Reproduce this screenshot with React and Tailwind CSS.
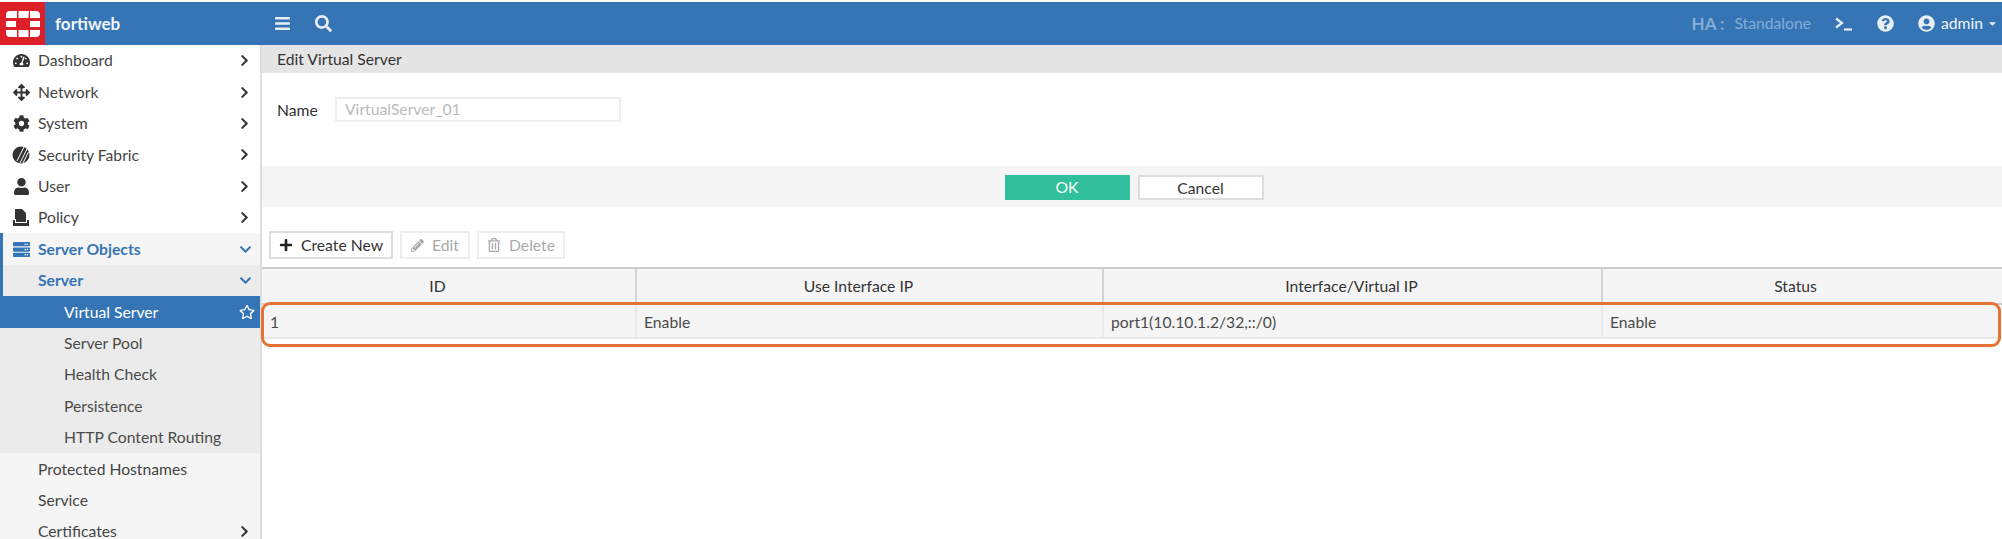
import React from "react";
import {
  FaBars,
  FaSearch,
  FaQuestionCircle,
  FaUserCircle,
  FaCaretDown,
  FaTachometerAlt,
  FaArrowsAlt,
  FaCog,
  FaUser,
  FaServer,
  FaChevronRight,
  FaChevronDown,
  FaRegStar,
  FaPlus,
  FaPencilAlt,
  FaRegTrashAlt,
} from "react-icons/fa";

function Logo() {
  return (
    <svg width="34" height="26" viewBox="0 0 34 26" fill="#fff">
      <path d="M11 0H4a4 4 0 0 0-4 4v3h11zM23 0H12.500v7H22.500zM24 0v7h10V4a4 4 0 0 0-4-4z" />
      <path d="M0 10h10v6H0zM24 10h10v6H24z" />
      <path d="M0 19v3a4 4 0 0 0 4 4h7v-7zM12.500 19v7H22.500v-7zM24 19v7h6a4 4 0 0 0 4-4v-3z" />
    </svg>
  );
}

function FabricIcon() {
  return (
    <svg width="18" height="18" viewBox="0 0 18 18">
      <circle cx="9" cy="9" r="8.500" fill="#333" />
      <path d="M8 17 15 3M11 17 16.500 6M5 15 12 1" stroke="#fff" strokeWidth="1" />
    </svg>
  );
}

function PolicyIcon() {
  return (
    <svg width="18" height="18" viewBox="0 0 18 18" fill="#333">
      <path d="M3 0h7l4 4v6H3z" />
      <path d="M1 11h2v3h12v-3h2v6H1z" />
      <path d="M4 10h10v3H4z" />
    </svg>
  );
}

function TerminalIcon() {
  return (
    <svg width="18" height="14" viewBox="0 0 18 14" fill="none" stroke="#e8eef6" strokeWidth="2.200">
      <path d="M1 1.500 7 6l-6 4.500" />
      <path d="M9 12.500h8" />
    </svg>
  );
}

function MenuRow({ icon, label, chevron, className = "", labelClass = "", iconBox = "w-[38px]" }) {
  return (
    <div className={`flex h-[31.4px] items-center ${className}`}>
      <span className={`flex shrink-0 justify-end pr-[8px] ${iconBox}`}>{icon}</span>
      <span className={`flex-1 whitespace-nowrap pt-[1px] ${labelClass}`}>{label}</span>
      {chevron === "right" && <FaChevronRight className="mr-[9px] text-[13px] text-[#333]" />}
      {chevron === "down" && <FaChevronDown className="mr-[8px] text-[13px] text-[#3575b5]" />}
    </div>
  );
}

function SubRow({ label, active }) {
  return (
    <div
      className={`flex h-[31.4px] items-center pl-[64px] ${
        active ? "bg-[#3575b5] text-white" : "text-[#4a4a4a]"
      }`}
    >
      <span className="flex-1 whitespace-nowrap pt-[1px]">{label}</span>
      {active && <FaRegStar className="mr-[5px] text-[16px] text-white" />}
    </div>
  );
}

function Sidebar() {
  const icon = "text-[17px] text-[#333]";
  return (
    <div className="w-[262px] shrink-0 overflow-hidden border-r-2 border-[#dddddd] bg-white text-[15.700px] text-[#444]">
      <MenuRow icon={<FaTachometerAlt className={icon} />} label="Dashboard" chevron="right" />
      <MenuRow icon={<FaArrowsAlt className={icon} />} label="Network" chevron="right" />
      <MenuRow icon={<FaCog className={icon} />} label="System" chevron="right" />
      <MenuRow icon={<FabricIcon />} label="Security Fabric" chevron="right" />
      <MenuRow icon={<FaUser className={icon} />} label="User" chevron="right" />
      <MenuRow icon={<PolicyIcon />} label="Policy" chevron="right" />
      <div className="border-l-[3px] border-[#3575b5]">
        <MenuRow
          icon={<FaServer className="text-[17px] text-[#3575b5]" />}
          label="Server Objects"
          chevron="down"
          iconBox="w-[35px]"
          className="bg-[#f5f5f5]"
          labelClass="font-bold text-[#3575b5]"
        />
        <MenuRow
          icon={null}
          label="Server"
          chevron="down"
          iconBox="w-[35px]"
          className="bg-[#ebebeb]"
          labelClass="font-bold text-[#3575b5]"
        />
      </div>
      <div className="bg-[#ebebeb]">
        <SubRow label="Virtual Server" active />
        <SubRow label="Server Pool" />
        <SubRow label="Health Check" />
        <SubRow label="Persistence" />
        <SubRow label="HTTP Content Routing" />
      </div>
      <div className="bg-[#f5f5f5]">
        <MenuRow icon={null} label="Protected Hostnames" />
        <MenuRow icon={null} label="Service" />
        <MenuRow icon={null} label="Certificates" chevron="right" />
      </div>
    </div>
  );
}

function ToolButton({ icon, label, disabled, className = "" }) {
  return (
    <button
      className={`flex h-[28px] items-center justify-center gap-[8px] border-2 ${
        disabled ? "border-[#eeeeee] text-[#aaaaaa]" : "border-[#dddddd] text-[#333]"
      } ${className}`}
    >
      {icon}
      <span className="pt-[1px]">{label}</span>
    </button>
  );
}

const columns = "grid grid-cols-[373px_467px_499px_1fr]";

function Table() {
  return (
    <div className="relative mt-[8px]">
      <div className={`${columns} h-[36px] border-t-2 border-[#cccccc] bg-[#f5f5f5] text-[#333]`}>
        <div className="flex items-center justify-center pt-[2px] pr-[22px]">ID</div>
        <div className="flex items-center justify-center border-l-2 border-[#d4d4d4] pt-[2px] pr-[22px]">Use Interface IP</div>
        <div className="flex items-center justify-center border-l-2 border-[#d4d4d4] pt-[2px] pr-[2px]">Interface/Virtual IP</div>
        <div className="flex items-center justify-center border-l-2 border-[#d4d4d4] pt-[2px] pr-[14px]">Status</div>
      </div>
      <div className={`${columns} h-[36px] border-t-2 border-b-2 border-t-[#cccccc] border-b-[#e8e8e8] bg-[#f5f5f5] text-[#4a4a4a]`}>
        <div className="flex items-center pt-[4px] pl-[8px]">1</div>
        <div className="flex items-center border-l-2 border-[#eaeaea] pt-[4px] pl-[7px]">Enable</div>
        <div className="flex items-center border-l-2 border-[#eaeaea] pt-[4px] pl-[7px]">port1(10.10.1.2/32,::/0)</div>
        <div className="flex items-center border-l-2 border-[#eaeaea] pt-[4px] pl-[7px]">Enable</div>
      </div>
      {/* annotation drawn over the row */}
      <div className="pointer-events-none absolute top-[35px] left-[-1px] h-[45px] w-[1740px] rounded-[9px] border-[3px] border-[#e67235]" />
    </div>
  );
}

export default function App() {
  return (
    <div
      className="flex h-[539px] w-[2002px] flex-col overflow-hidden bg-white pt-[2px] text-[15.700px]"
      style={{ fontFamily: '"Lato", "Open Sans", sans-serif' }}
    >
      {/* top bar */}
      <div className="flex h-[43px] shrink-0 items-center bg-[#3575b5] text-white">
        <div className="flex h-full w-[45px] items-center justify-center bg-[#dc2027]">
          <Logo />
        </div>
        <span className="ml-[10px] w-[219px] text-[17px] font-bold text-[#f2f6fb]">fortiweb</span>
        <FaBars className="text-[17px] text-[#e8eef6]" />
        <FaSearch className="ml-[24px] text-[17px] text-[#e8eef6]" />
        <div className="ml-auto flex items-center">
          <span className="text-[17px] font-bold text-[#86acd3]">HA :</span>
          <span className="ml-[10px] text-[#86acd3]">Standalone</span>
          <span className="ml-[24px]"><TerminalIcon /></span>
          <FaQuestionCircle className="ml-[24px] text-[17px] text-[#e8eef6]" />
          <FaUserCircle className="ml-[24px] text-[17px] text-[#e8eef6]" />
          <span className="ml-[6px] text-[#f2f6fb]">admin</span>
          <FaCaretDown className="ml-[4px] mr-[4px] text-[11px] text-[#e8eef6]" />
        </div>
      </div>

      <div className="flex min-h-0 flex-1">
        <Sidebar />

        <div className="min-w-0 flex-1">
          <div className="flex h-[28px] items-center bg-[#e5e5e5] pt-[2px] pl-[15px] text-[#333]">Edit Virtual Server</div>

          <div className="flex h-[93px] items-start pt-[24px] pl-[15px]">
            <span className="w-[58px] pt-[1px] leading-[25px] text-[#333]">Name</span>
            <div className="flex h-[25px] w-[286px] items-center border-2 border-[#eeeeee] pt-[1px] pl-[8px] text-[#bbbbbb]">
              VirtualServer_01
            </div>
          </div>

          <div className="flex h-[41px] items-center justify-center gap-[8px] bg-[#f5f5f5] pt-[2px] pl-[4px]">
            <button className="h-[25px] w-[125px] bg-[#32bf9b] text-white">OK</button>
            <button className="h-[25px] w-[126px] border-2 border-[#dddddd] bg-white text-[#333]">Cancel</button>
          </div>

          <div className="mt-[24px] flex gap-[7px] pl-[7px]">
            <ToolButton icon={<FaPlus className="text-[14px] text-[#222]" />} label="Create New" className="w-[124px]" />
            <ToolButton icon={<FaPencilAlt className="text-[13px]" />} label="Edit" disabled className="w-[70px]" />
            <ToolButton icon={<FaRegTrashAlt className="text-[14px]" />} label="Delete" disabled className="w-[88px]" />
          </div>

          <Table />
        </div>
      </div>
    </div>
  );
}
